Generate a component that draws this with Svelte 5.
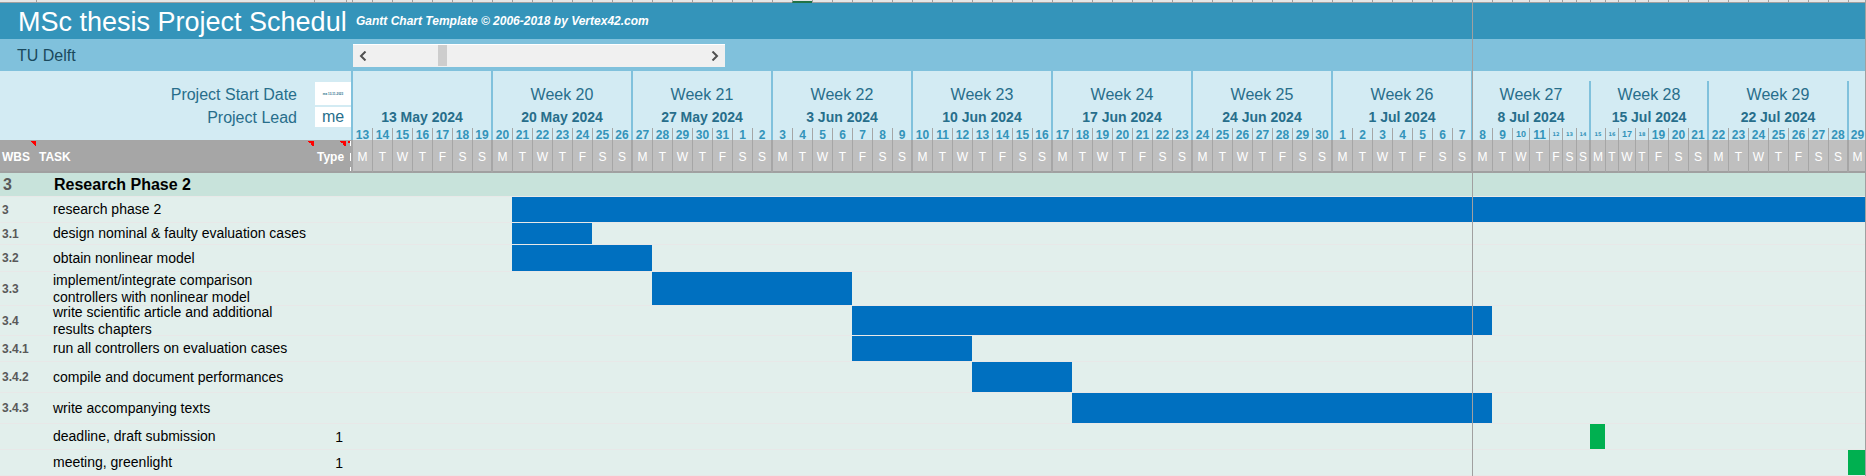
<script>
  const DAY = 20;
  const letters = ['M', 'T', 'W', 'T', 'F', 'S', 'S'];
  const narrow = { 59: 17, 61: 13, 62: 14, 63: 14, 64: 15, 65: 13, 66: 17, 67: 13 };

  const start = Date.UTC(2024, 4, 13);
  const days = Array.from({ length: 78 }, (_, i) => {
    const width = i === 77 ? 18 : (narrow[i + 1] ?? DAY);
    return {
      width,
      number: new Date(start + i * 86400000).getUTCDate(),
      letter: letters[i % 7],
      first: i % 7 === 0,
      last: i % 7 === 6,
      size: width < 16 ? 'tiny' : i === 58 || i === 65 ? 'small' : ''
    };
  });

  const weeks = [
    { label: '', date: '13 May 2024' },
    { label: 'Week 20', date: '20 May 2024' },
    { label: 'Week 21', date: '27 May 2024' },
    { label: 'Week 22', date: '3 Jun 2024' },
    { label: 'Week 23', date: '10 Jun 2024' },
    { label: 'Week 24', date: '17 Jun 2024' },
    { label: 'Week 25', date: '24 Jun 2024' },
    { label: 'Week 26', date: '1 Jul 2024' },
    { label: 'Week 27', date: '8 Jul 2024' },
    { label: 'Week 28', date: '15 Jul 2024' },
    { label: 'Week 29', date: '22 Jul 2024' },
    { label: '', date: '', span: 1 }
  ];

  const tasks = [
    { wbs: '3', name: 'research phase 2', height: 25, from: 8, length: 70 },
    { wbs: '3.1', name: 'design nominal & faulty evaluation cases', height: 21, from: 8, length: 4 },
    { wbs: '3.2', name: 'obtain nonlinear model', height: 26, from: 8, length: 7 },
    { wbs: '3.3', name: 'implement/integrate comparison controllers with nonlinear model', height: 33, from: 15, length: 10 },
    { wbs: '3.4', name: 'write scientific article and additional results chapters', height: 29, from: 25, length: 32 },
    { wbs: '3.4.1', name: 'run all controllers on evaluation cases', height: 25, from: 25, length: 6 },
    { wbs: '3.4.2', name: 'compile and document performances', height: 30, from: 31, length: 5 },
    { wbs: '3.4.3', name: 'write accompanying texts', height: 30, from: 36, length: 21 },
    { wbs: '', name: 'deadline, draft submission', height: 25, from: 63, length: 1, type: '1' },
    { wbs: '', name: 'meeting, greenlight', height: 25, from: 77, length: 1, type: '1' }
  ];

  let scroll = $state(20);
</script>

<table class="sheet">
  <colgroup>
    <col style:width="36px" />
    <col style:width="278px" />
    <col style:width="32px" />
    <col style:width="6px" />
    {#each days as day}
      <col style:width="{day.width}px" />
    {/each}
  </colgroup>
  <thead>
    <tr class="strip">
      <td></td><td></td><td></td><td></td>
      {#each days as day, i}
        <td class:picked={i === 22}>{#if i === 56}<span class="pane-line"></span>{/if}</td>
      {/each}
    </tr>
    <tr class="title-row">
      <td colspan="4"><h1>MSc thesis Project Schedul</h1></td>
      <td colspan="78" class="credit">Gantt Chart Template © 2006-2018 by Vertex42.com</td>
    </tr>
    <tr class="org-row">
      <td colspan="4" class="org">TU Delft</td>
      <td colspan="78">
        <div class="scroller">
          <button aria-label="Earlier" onclick={() => (scroll = Math.max(0, scroll - 1))}>
            <svg width="8" height="10" viewBox="0 0 8 10"><path d="M6.5 0.5 2 5l4.5 4.5" /></svg>
          </button>
          <input type="range" aria-label="Display week" min="0" max="100" bind:value={scroll} />
          <button aria-label="Later" onclick={() => (scroll = Math.min(100, scroll + 1))}>
            <svg width="8" height="10" viewBox="0 0 8 10"><path d="M1.5 0.5 6 5 1.5 9.5" /></svg>
          </button>
        </div>
      </td>
    </tr>
    <tr class="info spacer">
      <td colspan="4" class="edge"></td>
      {#each weeks as week, i}
        <td colspan={week.span ?? 7} class:wk={i < 9} class:wk-end={i < 8}></td>
      {/each}
    </tr>
    <tr class="info week-row">
      <td colspan="2" class="field-label"><label for="start">Project Start Date</label></td>
      <td colspan="2" class="edge field"><input id="start" class="shrunk" value="ma 13-11-2023" /></td>
      {#each weeks as week, i}
        <th colspan={week.span ?? 7} class="wk" class:wk-end={i < 11}>{week.label}</th>
      {/each}
    </tr>
    <tr class="info date-row">
      <td colspan="2" class="field-label"><label for="lead">Project Lead</label></td>
      <td colspan="2" class="edge field"><input id="lead" value="me" /></td>
      {#each weeks as week, i}
        <th colspan={week.span ?? 7} class="wk" class:wk-end={i < 11}>{week.date}</th>
      {/each}
    </tr>
    <tr class="info number-row">
      <td colspan="4" class="edge"></td>
      {#each days as day}
        <th class={day.size} class:wk={day.first} class:wk-end={day.last}><div>{day.number}</div></th>
      {/each}
    </tr>
    <tr class="letter-row">
      <th class="head noted wbs-head">WBS</th>
      <th class="head noted">TASK</th>
      <th class="head noted type-head">Type</th>
      <th class="head sliver"><i></i></th>
      {#each days as day}
        <th class="letter" class:last={day.last}>{day.letter}</th>
      {/each}
    </tr>
  </thead>
  <tbody>
    <tr class="phase">
      <td class="wbs">3</td>
      <td colspan="81"><h2>Research Phase 2</h2></td>
    </tr>
    {#each tasks as task}
      <tr class="task">
        <td class="wbs">{task.wbs}</td>
        <td><div class="name" style:height="{task.height}px"><span>{task.name}</span></div></td>
        <td class="type">{task.type ?? ''}</td>
        <td></td>
        <td colspan={task.from}></td>
        <td colspan={task.length} class={task.type ? 'milestone' : 'bar'}></td>
        {#if task.from + task.length < 78}
          <td colspan={78 - task.from - task.length}></td>
        {/if}
      </tr>
    {/each}
  </tbody>
</table>

<style>
  :global(body) {
    background: #e2efec;
    font-family: "Liberation Sans", Arial, sans-serif;
  }
  .sheet {
    position: relative;
    width: 100%;
    table-layout: fixed;
    border-collapse: separate;
    border-spacing: 0;
    color: #000;
  }
  .sheet::after {
    content: "";
    position: absolute;
    top: 0;
    right: 0;
    bottom: 0;
    border-right: 1px solid #a0a0a0;
  }
  td, th {
    box-sizing: border-box;
    padding: 0;
    white-space: nowrap;
  }
  h1, h2 {
    margin: 0;
    font-weight: inherit;
    font-size: inherit;
  }
  .strip td {
    height: 3px;
    line-height: 0;
    background: #e6e6e6;
    border-left: 1px solid #a0a0a0;
    border-bottom: 1px solid #a0a0a0;
  }
  .strip td:first-child {
    border-left: 0;
  }
  .strip td.picked {
    border-bottom: 2px solid #217346;
  }
  .pane-line {
    position: absolute;
    top: 0;
    bottom: 0;
    width: 1px;
    margin-left: -1px;
    background: #a0a0a0;
  }
  .title-row td {
    height: 36px;
    background: #3494ba;
    color: #fff;
  }
  .title-row h1 {
    padding: 2px 0 0 18px;
    font-size: 27px;
    line-height: 34px;
  }
  .title-row .credit {
    padding-left: 4px;
    font: italic bold 12px "Liberation Sans", Arial, sans-serif;
  }
  .org-row td {
    height: 32px;
    background: #80c1dc;
  }
  .org-row .org {
    padding: 2px 0 0 17px;
    font-size: 16px;
    color: #1a495d;
  }
  .scroller {
    display: flex;
    box-sizing: border-box;
    width: 372px;
    height: 23px;
    margin-left: 1px;
    border-top: 1px solid #fff;
    background: #f0f0f0;
  }
  .scroller button {
    display: grid;
    place-items: center;
    flex: none;
    width: 20px;
    padding: 0;
    border: 0;
    background: none;
  }
  .scroller path {
    fill: none;
    stroke: #505050;
    stroke-width: 2;
  }
  .scroller input {
    flex: 1;
    min-width: 0;
    margin: 0;
    appearance: none;
    background: none;
  }
  .scroller input::-webkit-slider-thumb {
    appearance: none;
    width: 9px;
    height: 21px;
    background: #cdcdcd;
  }
  .info td, .info th {
    background: #d3ebf3;
    color: #276e8b;
    font-weight: normal;
  }
  .info .edge, .info .wk-end {
    border-right: 1px solid #80c1dc;
  }
  .info .wk {
    border-left: 1px solid #80c1dc;
  }
  .spacer td {
    height: 10px;
  }
  .week-row th {
    height: 25px;
    padding-top: 2px;
    font-size: 16px;
  }
  .info .field-label {
    padding: 2px 17px 0 0;
    text-align: right;
    font-size: 16px;
    line-height: 18px;
  }
  .field input {
    display: block;
    box-sizing: border-box;
    width: 100%;
    height: 20px;
    padding: 0;
    border: 0;
    border-left: 1px solid #d3ebf3;
    border-radius: 0;
    background: #fff;
    color: inherit;
    font: 16px "Liberation Sans", Arial, sans-serif;
    text-align: center;
  }
  .field input.shrunk {
    height: 23px;
    font-size: 3px;
    font-weight: bold;
  }
  .info.date-row th {
    height: 22px;
    font-size: 14px;
    font-weight: bold;
  }
  .info.number-row th {
    height: 12px;
    border-left: 1px solid #a6a6a6;
    color: #3494ba;
    font-size: 12px;
    font-weight: bold;
  }
  .info.number-row .wk {
    border-left-color: #80c1dc;
  }
  .number-row div {
    height: 12px;
    line-height: 14px;
  }
  .info.number-row .small {
    font-size: 9px;
  }
  .info.number-row .tiny {
    font: bold 5px "DejaVu Sans", sans-serif;
  }
  .number-row .small div, .number-row .tiny div {
    line-height: 12px;
  }
  .letter-row th {
    height: 33px;
    padding-top: 2px;
    border-bottom: 2px solid #a0a0a0;
    background: #bfbfbf;
    color: #fff;
    font-size: 12px;
  }
  .letter-row .letter {
    border-left: 1px solid #a6a6a6;
    font-weight: normal;
  }
  .letter-row .last {
    border-right: 1px solid #a6a6a6;
  }
  .letter-row .head {
    background: #a6a6a6;
    padding-left: 3px;
    text-align: left;
  }
  .letter-row .wbs-head {
    padding-left: 2px;
  }
  .letter-row .noted {
    background-image: linear-gradient(45deg, transparent 50%, #f00 50%);
    background-repeat: no-repeat;
    background-position: right 1px;
    background-size: 6px 6px;
  }
  .letter-row .sliver {
    padding-top: 0;
    background: linear-gradient(#f00, #f00) 2px 1px / 2px 2px no-repeat #a6a6a6;
  }
  .sliver i {
    display: block;
    width: 1px;
    height: 30px;
    margin-left: 1px;
    background: linear-gradient(#fff 5px, transparent 5px 12px, #fff 12px 20px, transparent 20px 26px, #fff 26px);
  }
  .phase td {
    height: 24px;
    background: #c8e3db;
    border-bottom: 1px solid #e8e8e8;
  }
  .phase h2 {
    padding-left: 18px;
    font-size: 16px;
    font-weight: bold;
  }
  .wbs {
    padding-left: 2px;
    color: #595959;
    font-size: 12px;
    font-weight: bold;
  }
  .phase .wbs {
    padding-left: 3px;
    font-size: 16px;
  }
  .task td {
    background: #e2efec;
    border-bottom: 1px solid #e8e8e8;
  }
  .name {
    display: flex;
    align-items: center;
    padding: 0 4px 0 17px;
    font-size: 14px;
    line-height: 17px;
    white-space: normal;
  }
  .type {
    padding-right: 3px;
    text-align: right;
    font-size: 14px;
  }
  .task .bar {
    background: #0070c0;
  }
  .task .milestone {
    background: #00b050;
  }
</style>
